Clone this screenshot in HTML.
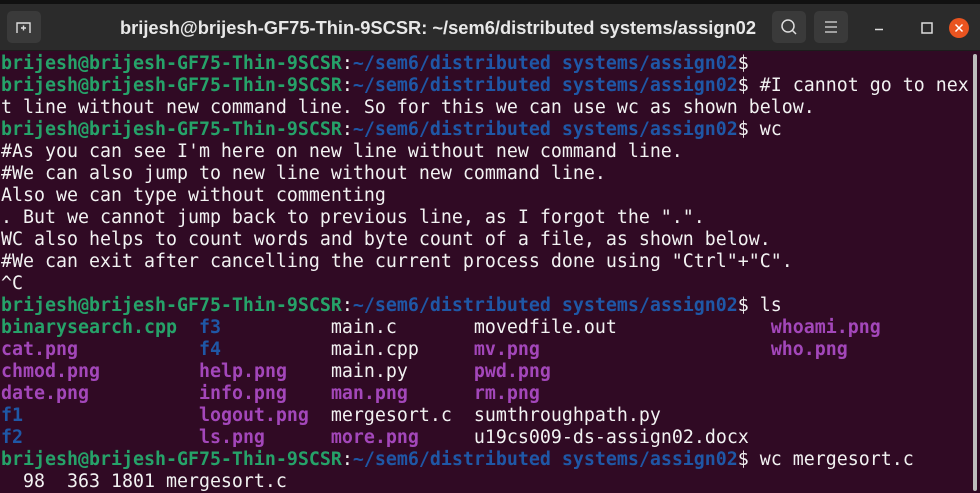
<!DOCTYPE html>
<html><head><meta charset="utf-8"><style>
html,body{margin:0;padding:0;width:980px;height:491px;overflow:hidden;background:#300a24;}
.top{position:absolute;left:0;top:0;width:980px;height:4px;background:#111;}
.hdr{position:absolute;left:0;top:4px;width:980px;height:46px;background:#2b2b2b;border-bottom:1px solid #1c1c1c;}
.btn{position:absolute;top:7px;width:34px;height:32px;background:#3a3a3a;border-radius:5px;}
.title{position:absolute;left:0;width:876px;top:13px;text-align:center;font:bold 18.3px "Liberation Sans",sans-serif;color:#e8e8e8;white-space:nowrap;}
.term{position:absolute;left:1px;top:53px;font-family:"DejaVu Sans Mono",monospace;font-size:18.27px;line-height:22px;color:#f2f2f2;white-space:pre;}
.g{color:#26a269;font-weight:bold}.b{color:#1f57a6;font-weight:bold}.m{color:#a347ba;font-weight:bold}
.sb{position:absolute;left:973px;top:54px;width:4px;height:437px;background:#bdbdbd;border-radius:2px;}
</style></head><body>
<div class="top"></div>
<div class="hdr">
 <div class="btn" style="left:7px"><svg width="34" height="32"><path d="M10 22 V12 H23 V22 M16.5 14.5 V19.5 M14 17 H19" stroke="#ddd" stroke-width="1.4" fill="none"/></svg></div>
 <div class="title">brijesh@brijesh-GF75-Thin-9SCSR: ~/sem6/distributed systems/assign02</div>
 <div class="btn" style="left:772px"><svg width="34" height="32"><circle cx="16" cy="15" r="6" stroke="#ddd" stroke-width="1.5" fill="none"/><path d="M20.5 19.5 L24 23" stroke="#ddd" stroke-width="1.5"/></svg></div>
 <div class="btn" style="left:814px"><svg width="34" height="32"><path d="M11 11H23M11 16H23M11 21H23" stroke="#ddd" stroke-width="1.3"/></svg></div>
 <svg style="position:absolute;left:870px;top:10px" width="110" height="30"><path d="M5 15.5H13" stroke="#ddd" stroke-width="1.5"/><rect x="52" y="9" width="10" height="10" stroke="#ddd" stroke-width="1.5" fill="none"/><circle cx="89" cy="14" r="10" fill="#e95420"/><path d="M85.5 10.5L92.5 17.5M92.5 10.5L85.5 17.5" stroke="#fff" stroke-width="1.5"/></svg>
</div>
<div class="sb"></div>
<div class="term"><span class="g">brijesh@brijesh-GF75-Thin-9SCSR</span>:<span class="b">~/sem6/distributed systems/assign02</span>$
<span class="g">brijesh@brijesh-GF75-Thin-9SCSR</span>:<span class="b">~/sem6/distributed systems/assign02</span>$ #I cannot go to nex
t line without new command line. So for this we can use wc as shown below.
<span class="g">brijesh@brijesh-GF75-Thin-9SCSR</span>:<span class="b">~/sem6/distributed systems/assign02</span>$ wc
#As you can see I'm here on new line without new command line.
#We can also jump to new line without new command line.
Also we can type without commenting
. But we cannot jump back to previous line, as I forgot the ".".
WC also helps to count words and byte count of a file, as shown below.
#We can exit after cancelling the current process done using "Ctrl"+"C".
^C
<span class="g">brijesh@brijesh-GF75-Thin-9SCSR</span>:<span class="b">~/sem6/distributed systems/assign02</span>$ ls
<span class="g">binarysearch.cpp</span>  <span class="b">f3</span>          main.c       movedfile.out              <span class="m">whoami.png</span>
<span class="m">cat.png</span>           <span class="b">f4</span>          main.cpp     <span class="m">mv.png</span>                     <span class="m">who.png</span>
<span class="m">chmod.png</span>         <span class="m">help.png</span>    main.py      <span class="m">pwd.png</span>
<span class="m">date.png</span>          <span class="m">info.png</span>    <span class="m">man.png</span>      <span class="m">rm.png</span>
<span class="b">f1</span>                <span class="m">logout.png</span>  mergesort.c  sumthroughpath.py
<span class="b">f2</span>                <span class="m">ls.png</span>      <span class="m">more.png</span>     u19cs009-ds-assign02.docx
<span class="g">brijesh@brijesh-GF75-Thin-9SCSR</span>:<span class="b">~/sem6/distributed systems/assign02</span>$ wc mergesort.c
  98  363 1801 mergesort.c</div>
</body></html>
